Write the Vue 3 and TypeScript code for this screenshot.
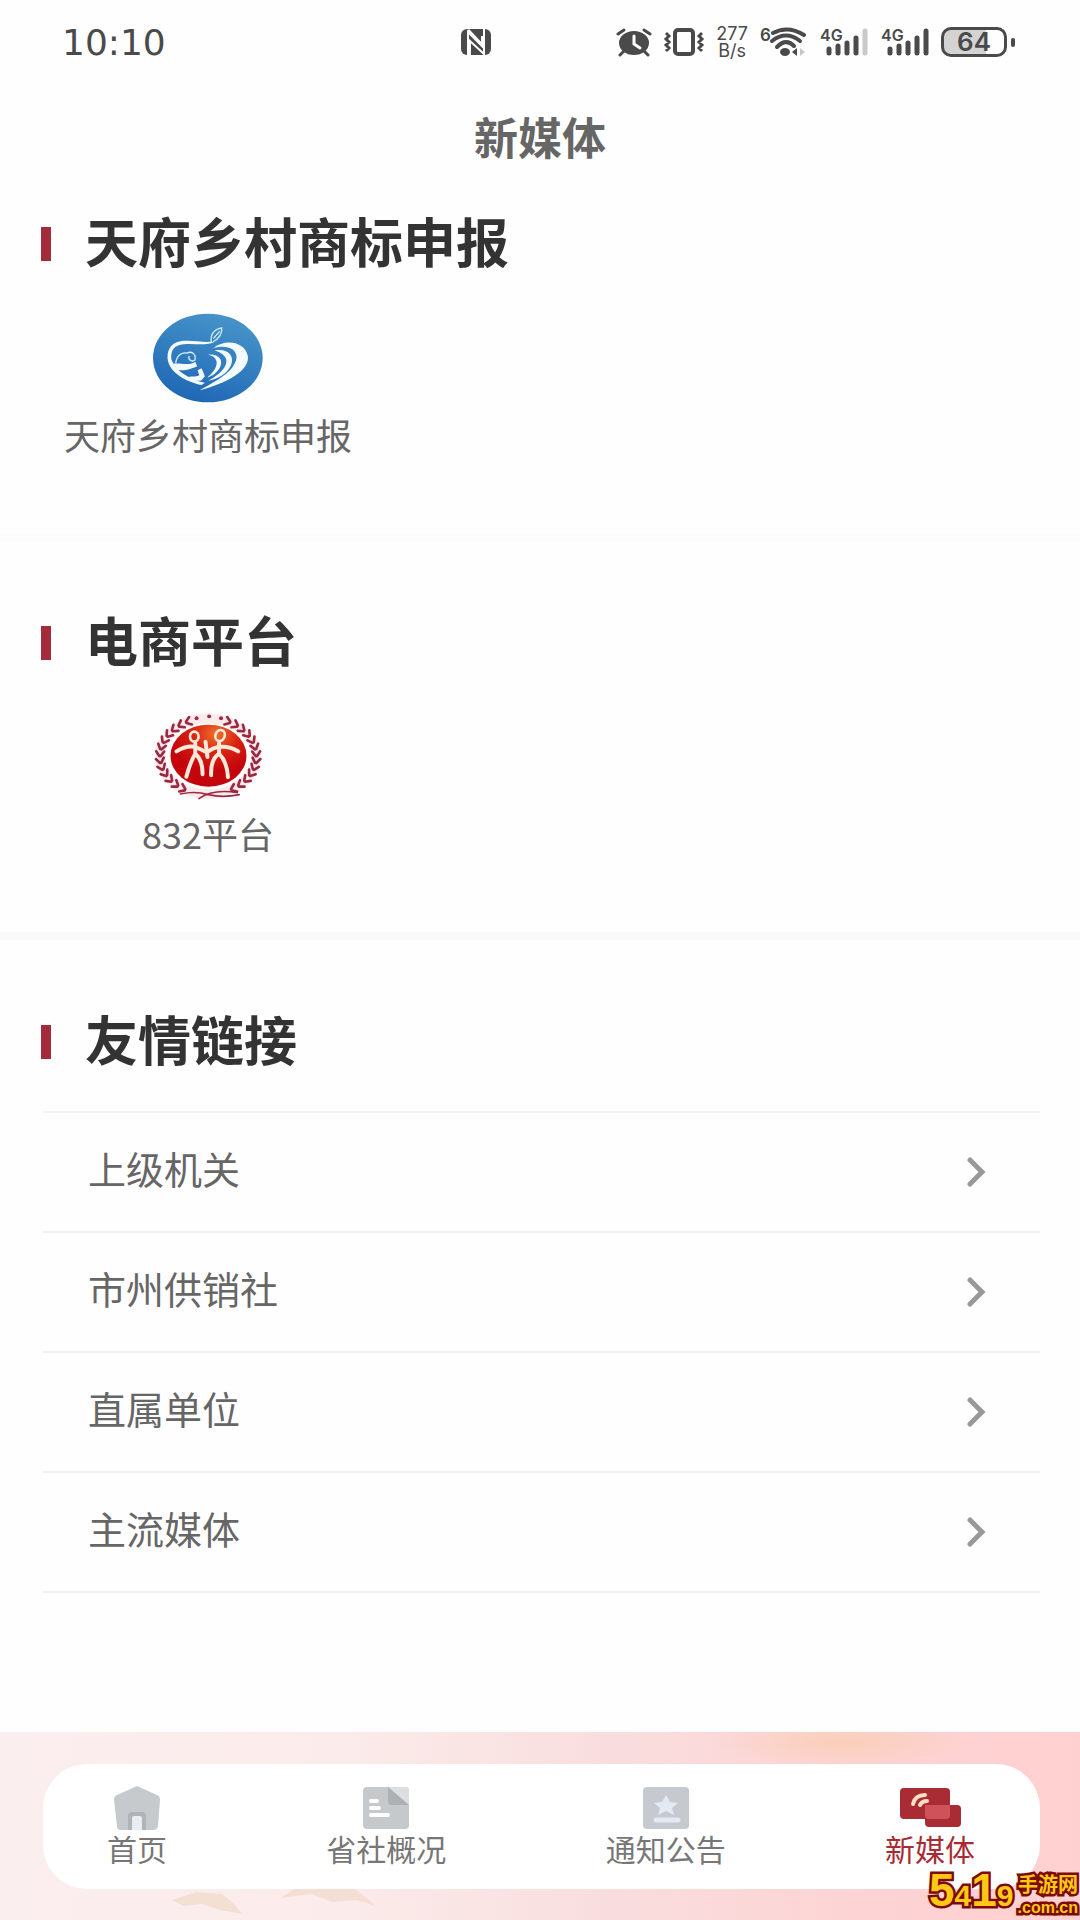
<script setup lang="ts">
import { ref } from 'vue'

interface Leaf {
  x: number
  y: number
  angle: number
}

const links: string[] = ['上级机关', '市州供销社', '直属单位', '主流媒体']

const tabs = [
  { id: 'home', label: '首页' },
  { id: 'about', label: '省社概况' },
  { id: 'notice', label: '通知公告' },
  { id: 'media', label: '新媒体' },
]
const current = ref('media')

// Leaves of the wreath, placed along an ellipse from the bottom up to the top.
const leaves: Leaf[] = []
for (let i = 0; i < 13; i++) {
  const t = ((120 + i * 10.4) * Math.PI) / 180
  const dx = -148 * Math.sin(t)
  const dy = 118 * Math.cos(t)
  leaves.push({
    x: 203 + 145 * Math.cos(t),
    y: 172 + 115 * Math.sin(t),
    angle: (Math.atan2(dy, dx) * 180) / Math.PI,
  })
}
</script>

<template>
  <div class="page">
    <div class="status">
      <span class="time">10:10</span>
      <svg class="nfc" width="32" height="28" viewBox="0 0 32 28">
        <rect x="1" y="1" width="30" height="26" rx="6" fill="#4a4a4a" />
        <path d="M8 27V4L22 18V8M10 27V13L24 26V1" fill="none" stroke="#fefefe" stroke-width="2" />
        <path d="M8 2L22 17" stroke="#fefefe" stroke-width="3" />
      </svg>
      <div class="indicators">
        <svg width="36" height="30" viewBox="0 0 36 30">
          <ellipse cx="18" cy="16" rx="15" ry="12" fill="#4a4a4a" />
          <path d="M2 7L8 3M34 7L28 3M8 24L4 28M28 24L32 28" stroke="#4a4a4a" stroke-width="3" stroke-linecap="round" />
          <path d="M18 9V17L24 21" fill="none" stroke="#fefefe" stroke-width="3" stroke-linecap="round" />
        </svg>
        <svg width="42" height="30" viewBox="0 0 42 30" fill="none" stroke="#4a4a4a">
          <rect x="12" y="3" width="18" height="24" rx="3" stroke-width="4" />
          <path d="M3 6L6 9L3 12L6 15L3 18L6 21L3 24M39 6L36 9L39 12L36 15L39 18L36 21L39 24" stroke-width="3" />
        </svg>
        <span class="speed"><span>277</span><span>B/s</span></span>
        <svg width="49" height="38" viewBox="0 -4 49 38">
          <text x="1" y="14" font-size="17" font-weight="600" fill="#4a4a4a">6</text>
          <g fill="none" stroke="#4a4a4a" stroke-width="4" stroke-linecap="round">
            <path d="M14 6Q29 -2 45 8" />
            <path d="M13 14Q27 3 41 14" />
            <path d="M18 20Q27 11 35 19" />
          </g>
          <ellipse cx="26" cy="25" rx="5" ry="4" fill="#4a4a4a" />
          <path d="M33 25L38 21V29Z" fill="#4a4a4a" />
          <path d="M41 21L46 25L41 29Z" fill="#c6c6c6" />
        </svg>
        <svg v-for="n in 2" :key="n" width="50" height="38" viewBox="0 -4 50 38">
          <text x="1" y="14" font-size="16" font-weight="600" fill="#4a4a4a">4G</text>
          <g stroke="#4a4a4a" stroke-width="5" stroke-linecap="round">
            <path d="M10 22V26M19 19V26M28 16V26M37 11V26" />
            <path d="M46 4V26" :stroke="n === 1 ? '#c9c9c9' : '#4a4a4a'" />
          </g>
        </svg>
        <span class="battery"><span class="cell">64</span><i class="tip"></i></span>
      </div>
    </div>

    <header class="header"><h1>新媒体</h1></header>

    <main>
      <section class="block first">
        <h2>天府乡村商标申报</h2>
        <a class="app" href="#">
          <svg width="110" height="90" viewBox="37 42 333 268">
            <defs>
              <linearGradient id="blue" x1="0.7" y1="0" x2="0.3" y2="1">
                <stop offset="0" stop-color="#4795cb" />
                <stop offset="1" stop-color="#1f66b4" />
              </linearGradient>
            </defs>
            <ellipse cx="203" cy="176" rx="166" ry="134" fill="url(#blue)" />
            <g fill="#f3fbff">
              <path d="M213 127C185 129 160 122 128 124C96 127 80 147 81 175C83 211 120 243 184 258L194 251C143 239 104 213 93 181C89 153 101 136 130 134C162 131 198 139 222 128Z" />
              <path d="M220 146C255 117 315 126 324 170C331 214 259 253 178 274C229 245 285 218 290 174C289 145 257 136 220 146Z" />
              <path d="M224 153C264 147 285 169 273 198C262 224 234 239 204 245C239 226 263 201 259 181C255 167 242 158 224 153Z" />
              <path d="M204 166C235 163 251 181 240 204C231 221 216 231 201 235C221 219 233 200 229 184C224 173 216 168 204 166Z" />
              <path d="M98 193C123 190 143 201 165 188L171 201C154 207 143 215 112 213Z" />
              <path d="M139 235C151 229 165 235 177 228L172 213L184 207L194 231L183 244C166 246 151 246 139 235Z" />
            </g>
            <g fill="none" stroke="#d4efff" stroke-width="4" stroke-linecap="round">
              <path d="M213 127C211 101 224 89 245 85C247 102 236 118 220 126M221 116L238 96" />
              <path d="M106 190C109 168 124 158 140 161C155 154 168 165 164 182C154 190 143 180 146 171" />
            </g>
          </svg>
          <span>天府乡村商标申报</span>
        </a>
      </section>

      <section class="block">
        <h2>电商平台</h2>
        <a class="app" href="#">
          <svg width="110" height="90" viewBox="37 38 333 272">
            <defs>
              <radialGradient id="red" cx="0.6" cy="0.15" r="0.6">
                <stop offset="0" stop-color="#f0702a" />
                <stop offset="0.5" stop-color="#d82412" />
                <stop offset="1" stop-color="#c4060c" />
              </radialGradient>
            </defs>
            <ellipse cx="204" cy="172" rx="145" ry="115" fill="none" stroke="#fdeaea" stroke-width="30" />
            <ellipse cx="205" cy="170" rx="115" ry="94" fill="url(#red)" />
            <g fill="none" stroke="#ffe9da" stroke-width="12" stroke-linecap="round" stroke-linejoin="round">
              <ellipse cx="162" cy="112" rx="13" ry="15" stroke-width="8" />
              <ellipse cx="240" cy="109" rx="14" ry="17" stroke-width="8" transform="rotate(20 240 109)" />
              <path d="M108 157Q136 139 163 143Q181 149 200 160Q219 145 241 143Q270 141 295 157" />
              <path d="M165 133V164Q150 188 138 234M165 164Q188 184 187 226" />
              <path d="M237 133V164Q211 180 213 229M237 164Q261 188 264 235" />
              <path d="M196 128L202 174" />
            </g>
            <g fill="none" stroke="#9c2943" stroke-width="8" stroke-linecap="round">
              <g v-for="(leaf, i) in leaves" :key="i">
                <path d="M-10 -12L4 -2M-10 12L4 2" :transform="`translate(${leaf.x} ${leaf.y}) rotate(${leaf.angle + 180})`" />
                <path d="M-10 -12L4 -2M-10 12L4 2" :transform="`translate(${408 - leaf.x} ${leaf.y}) rotate(${-leaf.angle})`" />
              </g>
              <path d="M120 286Q166 276 204 288Q250 298 298 288M176 300Q218 270 292 282" stroke-width="5" />
            </g>
            <g fill="#9c2943">
              <circle cx="169" cy="57" r="6" />
              <circle cx="207" cy="51" r="6" />
              <circle cx="243" cy="57" r="6" />
            </g>
          </svg>
          <span>832平台</span>
        </a>
      </section>

      <section class="block">
        <h2>友情链接</h2>
        <ul class="links">
          <li v-for="link in links" :key="link">
            <a href="#">
              <span>{{ link }}</span>
              <svg width="20" height="30" viewBox="0 0 20 30">
                <path d="M4 3L16 15L4 27" fill="none" stroke="#999" stroke-width="5" stroke-linecap="round" />
              </svg>
            </a>
          </li>
        </ul>
      </section>
    </main>

    <footer class="dock">
      <svg class="petals" width="240" height="34" viewBox="0 0 240 34">
        <path d="M0 14L24 6L50 8L62 18L70 28L48 24L30 18L12 20Z" fill="#f4e0d2" />
        <path d="M108 12L124 2H182L204 20L184 14L160 16L140 8Z" fill="#f5dfd4" />
      </svg>
      <nav class="tabs">
        <button
          v-for="tab in tabs"
          :key="tab.id"
          type="button"
          :class="['tab', { active: current === tab.id }]"
          @click="current = tab.id"
        >
          <svg v-if="tab.id === 'home'" width="48" height="44" viewBox="0 0 48 44">
            <path d="M24 0L44 9Q47 10 47 14L45 40Q44 44 40 44H8Q4 44 4 40L1 14Q1 10 4 9Z" fill="#c6cacd" />
            <path d="M15 44V30Q15 26 19 26H29Q33 26 33 30V44Z" fill="#b0b4b8" />
            <path d="M19 44V32Q19 30 21 30H27Q29 30 29 32V44Z" fill="#e8edf2" />
          </svg>
          <svg v-else-if="tab.id === 'about'" width="48" height="44" viewBox="0 0 48 44">
            <rect x="1" y="1" width="46" height="42" rx="4" fill="#c6c9cb" />
            <path d="M26 1H43Q47 1 47 5V19Z" fill="#dcdee0" />
            <path d="M26 1L47 19H30Q26 19 26 15Z" fill="#aeb1b4" />
            <path d="M9 15H15M9 22H17M9 29H26" stroke="#fff" stroke-width="4" stroke-linecap="round" />
          </svg>
          <svg v-else-if="tab.id === 'notice'" width="48" height="44" viewBox="0 0 48 44">
            <rect x="1" y="1" width="46" height="42" rx="4" fill="#c6c9ce" />
            <path d="M24 9L28 16L36 17L30 22L32 29L24 25L16 29L18 22L12 17L20 16Z" fill="#e2eaf5" />
            <path d="M14 34H36" stroke="#e2eaf5" stroke-width="5" stroke-linecap="round" />
          </svg>
          <svg v-else width="62" height="44" viewBox="0 0 62 44">
            <rect x="1" y="2" width="50" height="31" rx="4" fill="#a92b33" />
            <rect x="26" y="19" width="36" height="22" rx="4" fill="#a92b33" />
            <path d="M26 19H51V29Q51 33 47 33H30Q26 33 26 29Z" fill="#cf5159" />
            <path d="M14 18Q16 9 26 9M21 19Q23 15 28 15" fill="none" stroke="#ffdfc4" stroke-width="4" stroke-linecap="round" />
          </svg>
          <span>{{ tab.label }}</span>
        </button>
      </nav>
      <div class="mark">
        <span class="mark-num"><b class="big">5</b><b>4</b><b class="big">1</b><b>9</b></span>
        <span class="mark-site"><span>手游网</span><span class="domain">.com.cn</span></span>
      </div>
    </footer>
  </div>
</template>

<style>
body {
  margin: 0;
}
</style>

<style scoped>
.page {
  display: flex;
  flex-direction: column;
  min-height: 100vh;
  background: #fefefe;
  color: #666;
  font-family: 'Noto Sans CJK SC', sans-serif;
}

.page svg {
  display: block;
  flex: none;
}

.page a {
  color: inherit;
  text-decoration: none;
}

.status {
  display: grid;
  grid-template-columns: 1fr auto 1fr;
  align-items: center;
  height: 84px;
  padding: 0 65px 0 62px;
  color: #4a4a4a;
  font-family: Inter, sans-serif;
}

.time {
  font-family: 'DejaVu Sans', sans-serif;
  font-size: 36px;
}

.nfc {
  margin-right: 124px;
}

.indicators {
  display: flex;
  align-items: center;
  justify-content: flex-end;
  gap: 11px;
}

.speed {
  display: flex;
  flex-direction: column;
  align-items: center;
  font-size: 18px;
  line-height: 17px;
}

.battery {
  display: flex;
  align-items: center;
  gap: 4px;
}

.cell {
  box-sizing: border-box;
  width: 66px;
  height: 30px;
  border: 3px solid #4a4a4a;
  border-radius: 10px;
  background: linear-gradient(90deg, #d3d3d3 70%, #fefefe 70%);
  font-size: 26px;
  font-weight: 600;
  line-height: 24px;
  text-align: center;
}

.tip {
  width: 4px;
  height: 9px;
  border-radius: 2px;
  background: #4a4a4a;
}

.header {
  display: flex;
  align-items: flex-start;
  justify-content: center;
  height: 86px;
  padding-top: 20px;
}

h1 {
  margin: 0;
  font-size: 44px;
  line-height: 64px;
}

.block {
  padding: 69px 40px 74px 41px;
  border-bottom: 8px solid #fafafa;
}

.block.first {
  padding-top: 21px;
  border-bottom-color: #fcfcfc;
}

.block:last-child {
  padding-bottom: 0;
  border-bottom: 0;
}

h2 {
  display: flex;
  align-items: flex-start;
  gap: 34px;
  height: 66px;
  margin: 0 0 36px;
  color: #333;
  font-size: 53px;
  line-height: 58px;
}

h2::before {
  align-self: center;
  width: 10px;
  height: 34px;
  background: #a22c3b;
  content: '';
}

.app {
  display: flex;
  flex-direction: column;
  align-items: center;
  gap: 12px;
  width: 288px;
  margin-left: 23px;
  padding-bottom: 6px;
  font-size: 36px;
  line-height: 38px;
}

.links {
  margin: 0 0 0 2px;
  padding: 0;
  border-top: 2px solid #f3f3f3;
  list-style: none;
}

.links li {
  border-bottom: 2px solid #f0f0f0;
}

.links a {
  display: flex;
  align-items: center;
  justify-content: space-between;
  height: 118px;
  padding: 0 54px 0 45px;
  font-size: 38px;
  line-height: 48px;
}

.links span {
  padding-bottom: 8px;
}

.dock {
  position: relative;
  margin-top: auto;
  padding: 32px 40px 31px 43px;
  background:
    radial-gradient(ellipse 130px 26px at 78% 10px, #f9cfb9, transparent),
    linear-gradient(90deg, #fbeeee 0%, #fbeceb 30%, #f9dedf 55%, #fdd3d3 80%, #ffd0d0 100%);
}

.petals {
  position: absolute;
  bottom: 0;
  left: 172px;
}

.tabs {
  position: relative;
  display: flex;
  justify-content: space-between;
  box-sizing: border-box;
  height: 125px;
  padding: 22px 65px 0 64px;
  border-radius: 44px;
  background: #fff;
}

.tab {
  display: flex;
  flex-direction: column;
  align-items: center;
  padding: 0;
  border: 0;
  background: none;
  color: #777;
  font: inherit;
  font-size: 30px;
  line-height: 36px;
}

.tab.active {
  color: #a92b33;
}

.mark {
  position: absolute;
  right: 2px;
  bottom: 2px;
  display: flex;
  align-items: flex-end;
  gap: 4px;
  color: #ffc814;
  font-family: 'Liberation Sans', 'Noto Sans CJK SC', sans-serif;
  font-weight: 700;
  -webkit-text-stroke: 5px #7c0a06;
  paint-order: stroke fill;
}

.mark-num {
  display: flex;
  align-items: baseline;
  font-size: 30px;
  line-height: 44px;
}

.mark-num .big {
  font-size: 46px;
}

.mark-site {
  display: flex;
  flex-direction: column;
  align-items: flex-end;
  font-size: 20px;
  line-height: 26px;
}

.domain {
  font-size: 16px;
  line-height: 20px;
}
</style>
